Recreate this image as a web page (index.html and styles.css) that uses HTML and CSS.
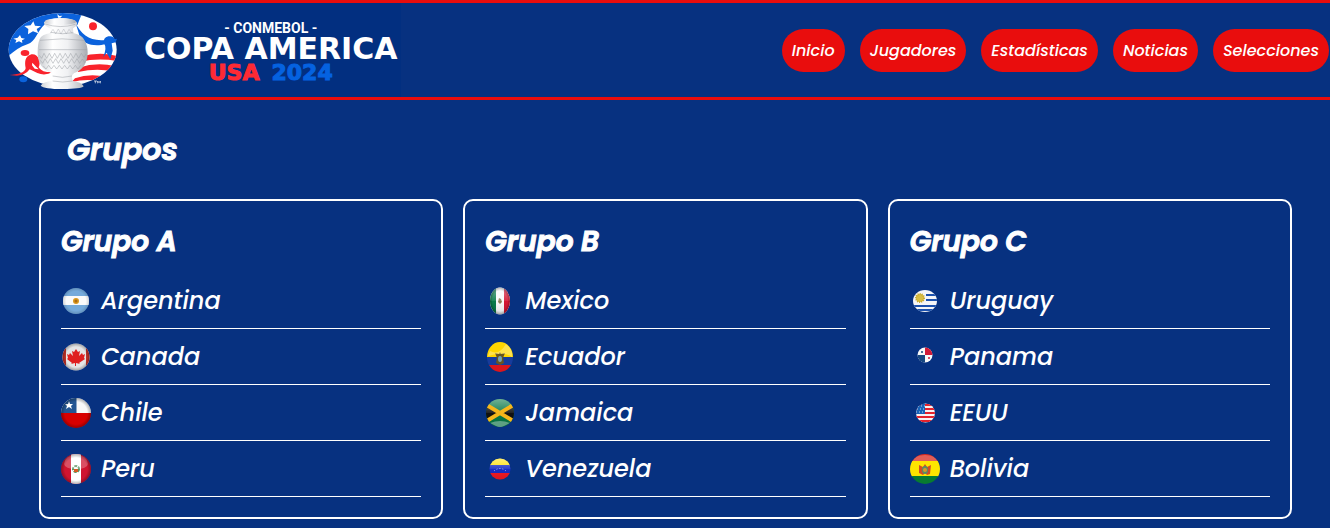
FILE: index.html
```html
<!DOCTYPE html>
<html lang="es">
<head>
<meta charset="utf-8">
<meta name="viewport" content="width=device-width, initial-scale=1">
<title>Copa America 2024 - Grupos</title>
<link rel="stylesheet" href="styles.css">
</head>
<body>
<svg class="defs" width="0" height="0" aria-hidden="true">
  <defs>
    <linearGradient id="shine" x1="0" y1="0" x2="0" y2="1">
      <stop offset="0" stop-color="#fff" stop-opacity=".45"/>
      <stop offset=".5" stop-color="#fff" stop-opacity=".08"/>
      <stop offset=".52" stop-color="#000" stop-opacity="0"/>
      <stop offset="1" stop-color="#000" stop-opacity=".12"/>
    </linearGradient>
    <radialGradient id="rim">
      <stop offset=".75" stop-color="#000" stop-opacity="0"/>
      <stop offset="1" stop-color="#000" stop-opacity=".3"/>
    </radialGradient>
  </defs>
</svg>
<header class="header">
  <div class="brand">
    <svg class="brand-cup" viewBox="0 9 390 282" aria-hidden="true">
      <defs>
        <clipPath id="oval"><ellipse cx="188" cy="149" rx="162" ry="110"/></clipPath>
        <linearGradient id="silver">
          <stop offset="0" stop-color="#c4c7cc"/>
          <stop offset=".3" stop-color="#fff"/>
          <stop offset=".6" stop-color="#f0f1f3"/>
          <stop offset="1" stop-color="#a8abb1"/>
        </linearGradient>
      </defs>
      <g clip-path="url(#oval)">
        <rect x="20" y="30" width="340" height="240" fill="#fff"/>
        <path d="M20 30H250L232 75L135 72C110 95 108 125 82 133C60 140 40 155 20 172Z" fill="#0b62dc"/>
        <path d="M240 171Q295 153 352 168V183Q295 173 240 185ZM236 203Q292 185 346 199L338 214Q290 203 234 216ZM225 235Q270 219 318 231L300 244Q260 235 215 246Z" fill="#f9232c"/>
        <path d="M227 70C243 103 270 125 316 120L318 132C280 143 250 130 240 112Z" fill="#0b62dc"/>
      </g>
      <path d="M312 130Q308 114 325 109Q340 106 344 118L351 116L347 127L335 130L338 152L331 178L320 158L309 172Q322 144 312 130Z" fill="#0b62dc"/>
      <path d="M100 64L105 77 123 79 110 87 115 100 99 94 84 103 85 87 73 78 92 76ZM60 105L64 114 75 116 66 121 67 129 57 124 46 129 49 120 40 116 53 113ZM172 42L178 48 187 47 181 53 174 53Z" fill="#fff"/>
      <circle cx="279" cy="79" r="12" fill="#f9232c"/>
      <ellipse cx="75" cy="159" rx="13" ry="9" fill="#f9232c"/>
      <path d="M28 225C54 224 75 218 77 205C73 181 77 169 91 164C112 157 125 184 116 202C130 219 140 216 158 216Q135 229 112 219L89 208Q76 226 51 227Z" fill="#f9232c"/>
      <path d="M97 188L107 199 116 208 104 206 96 196Z" fill="#fff"/>
      <ellipse cx="70" cy="238" rx="12" ry="9" fill="#0b62dc"/>
      <g fill="url(#silver)">
        <path d="M132 67Q148 55 180 54Q217 54 230 66Q235 76 219 85L220 99Q247 105 253 120Q263 135 263 158C263 185 250 207 230 216Q213 222 216 233L218 243Q244 246 251 259Q243 267 188 267Q132 267 122 257Q130 245 157 243L159 232Q161 220 143 214C122 203 112 180 113 156Q113 132 119 117Q124 104 152 99L153 86Q132 79 132 67Z"/>
        <ellipse cx="181" cy="65" rx="47" ry="10"/>
      </g>
      <g fill="none" stroke="#9b9fa6" stroke-opacity=".5" stroke-width="3">
        <path d="M136 72Q180 87 226 73M152 97Q188 105 220 98M120 121Q186 112 252 121M117 149H261M158 228Q188 236 216 228M158 243Q188 249 218 243"/>
        <path d="M118 166l7 9 7-15 8 15 8-15 8 15 8-15 8 15 8-15 8 15 8-15 8 15 8-15 8 15 8-15 8 15 8-15 8 12 6-10"/>
        <path d="M121 181l7 9 7-14 8 14 8-14 8 14 8-14 8 14 8-14 8 14 8-14 8 14 8-14 8 14 8-14 8 14 8-13 8 12"/>
        <path d="M130 198l8 9 8-11 8 11 8-11 8 11 8-11 8 11 8-11 8 11 8-11 8 11 8-11 8 11 8-11"/>
        <path d="M151 100l8-12 8 14 8-15 8 15 8-15 8 15 8-14 9 12" stroke-opacity=".35"/>
      </g>
      <path d="M282 243H291M286 243V250M293 250V243L297 248 301 243V250" fill="none" stroke="#fff" stroke-width="2"/>
    </svg>
    <div class="brand-text">
      <span class="brand-top">- CONMEBOL -</span>
      <span class="brand-name">COPA AMERICA</span>
      <span class="brand-year"><span class="brand-usa">USA</span><span>2024</span></span>
    </div>
  </div>
  <nav class="nav" aria-label="Principal">
    <a class="nav-link" href="#inicio">Inicio</a>
    <a class="nav-link" href="#jugadores">Jugadores</a>
    <a class="nav-link" href="#estadisticas">Estadísticas</a>
    <a class="nav-link" href="#noticias">Noticias</a>
    <a class="nav-link" href="#selecciones">Selecciones</a>
  </nav>
</header>
<main class="main">
  <h1 class="title">Grupos</h1>
  <div class="groups">
    <section class="card">
      <h2 class="card-title">Grupo A</h2>
      <ul class="teams">
        <li class="team">
          <svg class="flag" viewBox="0 0 30 30" aria-hidden="true"><clipPath id="c1"><circle cx="15" cy="15" r="13"/></clipPath><g clip-path="url(#c1)"><path fill="#75aadb" d="M0 0h30v30H0z"/><path fill="#fafafa" d="M0 10h30v9H0z"/><circle cx="15" cy="15" r="3" fill="#d9981f"/><circle cx="15" cy="15" r="1.500" fill="#ad6b12"/><circle cx="15" cy="15" r="13" fill="url(#rim)" fill-opacity=".5"/></g></svg>
          Argentina</li>
        <li class="team">
          <svg class="flag" viewBox="0 0 30 30" aria-hidden="true"><clipPath id="c2"><circle cx="15" cy="15" r="13.500"/></clipPath><g clip-path="url(#c2)"><path fill="#e5e5e5" d="M0 0h30v30H0z"/><path fill="#c5332b" d="M0 0h5v30H0zM25 0h5v30h-5z"/><path fill="#df2020" d="M15 7l2 3 2-1-1 5 3-3 1 2 2-1-1 4 1 1-6 4 1 1-4-1v3h-1v-3l-4 1 1-1-5-4 1-1-1-4 2 1 1-2 3 3-1-5 2 1z"/><circle cx="15" cy="15" r="13.500" fill="url(#rim)"/></g></svg>
          Canada</li>
        <li class="team">
          <svg class="flag" viewBox="0 0 30 30" aria-hidden="true"><clipPath id="c3"><circle cx="15" cy="15" r="15"/></clipPath><g clip-path="url(#c3)"><path fill="#f8f8f8" d="M0 0h30v15H0z"/><path fill="#235693" d="M0 0h15.500v15H0z"/><path fill="#d80000" d="M0 15h30v15H0z"/><path fill="#fff" d="M8 3l1 3h3l-2 2 1 3-3-2-3 2 1-3-2-2h3z"/><circle cx="15" cy="15" r="15" fill="url(#rim)"/></g></svg>
          Chile</li>
        <li class="team">
          <svg class="flag" viewBox="0 0 30 30" aria-hidden="true"><clipPath id="c4"><circle cx="15" cy="15" r="15"/></clipPath><g clip-path="url(#c4)"><path fill="#cf1430" d="M0 0h30v30H0z"/><path fill="#fff" d="M10 0h10v30H10z"/><circle cx="15" cy="15" r="3" fill="none" stroke="#56915d" stroke-width="2" stroke-dasharray="3 1"/><path fill="#d65d22" d="M13 15h4v3h-4z"/><path fill="#fff" fill-opacity=".25" d="M3 10Q4 1 15 1T27 10Q26 15 15 15T3 10z"/><circle cx="15" cy="15" r="15" fill="url(#rim)"/></g></svg>
          Peru</li>
      </ul>
    </section>
    <section class="card">
      <h2 class="card-title">Grupo B</h2>
      <ul class="teams">
        <li class="team">
          <svg class="flag" viewBox="0 0 30 30" aria-hidden="true"><clipPath id="c5"><ellipse cx="15" cy="15" rx="10" ry="13.500"/></clipPath><g clip-path="url(#c5)"><path fill="#fafafa" d="M0 0h30v30H0z"/><path fill="#087a49" d="M0 0h11v30H0z"/><path fill="#d51734" d="M19 0h11v30H19z"/><path fill="#8e8057" d="M14 12l2 1 1 3-2 2-2-2z"/><path fill="url(#shine)" d="M0 0h30v30H0z"/><ellipse cx="15" cy="15" rx="10" ry="13.500" fill="url(#rim)"/></g></svg>
          Mexico</li>
        <li class="team">
          <svg class="flag" viewBox="0 0 30 30" aria-hidden="true"><clipPath id="c6"><ellipse cx="15" cy="15" rx="13" ry="15"/></clipPath><g clip-path="url(#c6)"><path fill="#ffd600" d="M0 0h30v16H0z"/><path fill="#173c9c" d="M0 15h30v8H0z"/><path fill="#db161c" d="M0 23h30v7H0z"/><path fill="#68551f" d="M10 11l4 1 1-2 1 2 4-1-2 5 1 5-4 2-4-2 1-5z"/><ellipse cx="15" cy="17" rx="2" ry="3" fill="#75a1b0"/><path fill="#fff" fill-opacity=".3" d="M5 9Q14 14 21 2Q28 7 27 15Q20 9 3 14z"/></g></svg>
          Ecuador</li>
        <li class="team">
          <svg class="flag" viewBox="0 0 30 30" aria-hidden="true"><clipPath id="c7"><circle cx="15" cy="15" r="14"/></clipPath><g clip-path="url(#c7)"><path fill="#087847" d="M0 0h30v30H0z"/><path fill="#111" d="M0 5l13 10L0 25zM30 5L17 15l13 10z"/><path fill="url(#shine)" d="M0 0h30v30H0z"/><path stroke="#f6b61b" stroke-width="4" d="M0 6l30 18M30 6L0 24"/><path fill="#fff" fill-opacity=".35" d="M5 25Q15 21 25 25L15 30z"/></g></svg>
          Jamaica</li>
        <li class="team">
          <svg class="flag" viewBox="0 0 30 30" aria-hidden="true"><clipPath id="c8"><circle cx="15" cy="15" r="10.500"/></clipPath><g clip-path="url(#c8)"><path fill="#ffe10a" d="M0 0h30v12H0z"/><path fill="#172dc6" d="M0 11h30v8H0z"/><path fill="#f61924" d="M0 19h30v11H0z"/><path fill="none" stroke="#fff" stroke-opacity=".7" stroke-dasharray="1 2" d="M9 17Q15 12 21 17"/><path fill="url(#shine)" d="M0 4h30v22H0z"/></g></svg>
          Venezuela</li>
      </ul>
    </section>
    <section class="card">
      <h2 class="card-title">Grupo C</h2>
      <ul class="teams">
        <li class="team">
          <svg class="flag" viewBox="0 0 30 30" aria-hidden="true"><clipPath id="c9"><ellipse cx="15" cy="15" rx="12" ry="11"/></clipPath><g clip-path="url(#c9)"><path fill="#f4f5f7" d="M0 0h30v30H0z"/><path fill="#1b51ae" d="M16 8h14v2H16zM16 13h14v2H16zM0 19h30v2H0zM0 23h30v2H0z"/><circle cx="10" cy="12" r="4" fill="#d7bd45"/><circle cx="10" cy="12" r="4" fill="none" stroke="#c5a728" stroke-width="2" stroke-dasharray="1 1"/></g></svg>
          Uruguay</li>
        <li class="team">
          <svg class="flag" viewBox="0 0 30 30" aria-hidden="true"><clipPath id="c10"><circle cx="15" cy="13" r="7.500"/></clipPath><g clip-path="url(#c10)"><path fill="#f8f8f8" d="M0 0h30v30H0z"/><path fill="#d21a38" d="M15 0h15v13H15z"/><path fill="#174781" d="M0 13h15v17H0z"/><circle cx="12" cy="10" r="1" fill="#174781"/><circle cx="19" cy="16" r="1" fill="#d21a38"/></g></svg>
          Panama</li>
        <li class="team">
          <svg class="flag" viewBox="0 0 30 30" aria-hidden="true"><clipPath id="c11"><circle cx="15.500" cy="15" r="9.500"/></clipPath><g clip-path="url(#c11)"><path fill="#f8f2f2" d="M0 0h30v30H0z"/><path stroke="#e3232d" stroke-width="2" d="M0 7h30M0 11h30M0 15h30M0 19h30M0 23h30"/><path fill="#1763b8" d="M5 5h10v11H5z"/><path stroke="#fff" stroke-opacity=".7" stroke-dasharray="1 2" d="M8 8h7M7 11h8M6 14h9"/></g></svg>
          EEUU</li>
        <li class="team">
          <svg class="flag" viewBox="0 0 30 30" aria-hidden="true"><clipPath id="c12"><circle cx="15" cy="15" r="15"/></clipPath><g clip-path="url(#c12)"><path fill="#d9281e" d="M0 0h30v8H0z"/><path fill="#fee500" d="M0 7h30v16H0z"/><path fill="#087b31" d="M0 22h30v8H0z"/><path fill="#d34a24" d="M9 11l4 2 2-3 2 3 4-2-1 9-3 1-2-2-2 2-4-2z"/><ellipse cx="15" cy="16" rx="3" ry="4" fill="#578c69"/><circle cx="15" cy="16" r="2" fill="#d79a27"/><path fill="#fff" fill-opacity=".25" d="M2 7Q5 1 15 1T28 7z"/></g></svg>
          Bolivia</li>
      </ul>
    </section>
  </div>
</main>
</body>
</html>
```
FILE: styles.css
```css
* {
  box-sizing: border-box;
  margin: 0;
  padding: 0;
}

body {
  background: #073180;
  color: #fff;
  font-family: Poppins, Inter, "Open Sans", sans-serif;
  font-style: italic;
  font-weight: 500;
}

.defs {
  position: absolute;
}

.header {
  display: flex;
  align-items: center;
  justify-content: space-between;
  border-top: 3px solid #e90d0d;
  border-bottom: 3px solid #e90d0d;
}

.brand {
  display: flex;
  align-items: center;
  gap: 14px;
  padding-right: 4px;
  background: #022f80;
  font-style: normal;
}

.brand-cup {
  display: block;
  width: 130px;
  height: 94px;
}

.brand-text {
  display: flex;
  flex-direction: column;
  align-items: center;
  padding-top: 4px;
  font-family: "DejaVu Sans", sans-serif;
  font-weight: 700;
  white-space: nowrap;
}

.brand-top {
  font: 700 14px/16px Roboto, sans-serif;
}

.brand-name {
  font-size: 30px;
  line-height: 25px;
}

.brand-year {
  display: flex;
  gap: 12px;
  color: #0562e0;
  font-size: 22px;
  line-height: 24px;
  -webkit-text-stroke: 1px currentColor;
}

.brand-usa {
  color: #fe2a34;
}

.nav {
  display: flex;
  gap: 15px;
  padding-right: 1px;
}

.nav-link {
  padding: 10px;
  border-radius: 24px;
  background: #e90d0d;
  color: #fff;
  font-size: 16px;
  line-height: 23px;
  text-decoration: none;
}

.main {
  padding: 26px 38px 9px 39px;
}

.title,
.card-title {
  font-weight: 600;
  -webkit-text-stroke: 1px #fff;
}

.title {
  padding-left: 28px;
  font-size: 30px;
  line-height: 48px;
}

.groups {
  display: grid;
  grid-template-columns: repeat(3, 1fr);
  gap: 20px;
  margin-top: 25px;
}

.card {
  padding: 20px;
  border: 2px solid #fff;
  border-radius: 10px;
}

.card-title {
  margin-bottom: 10px;
  font-size: 28px;
  line-height: 42px;
}

.teams {
  list-style: none;
}

.team {
  display: flex;
  align-items: center;
  gap: 10px;
  height: 56px;
  border-bottom: 1px solid #fff;
  font-size: 24px;
}

.flag {
  flex: none;
  width: 30px;
  height: 30px;
}
```
